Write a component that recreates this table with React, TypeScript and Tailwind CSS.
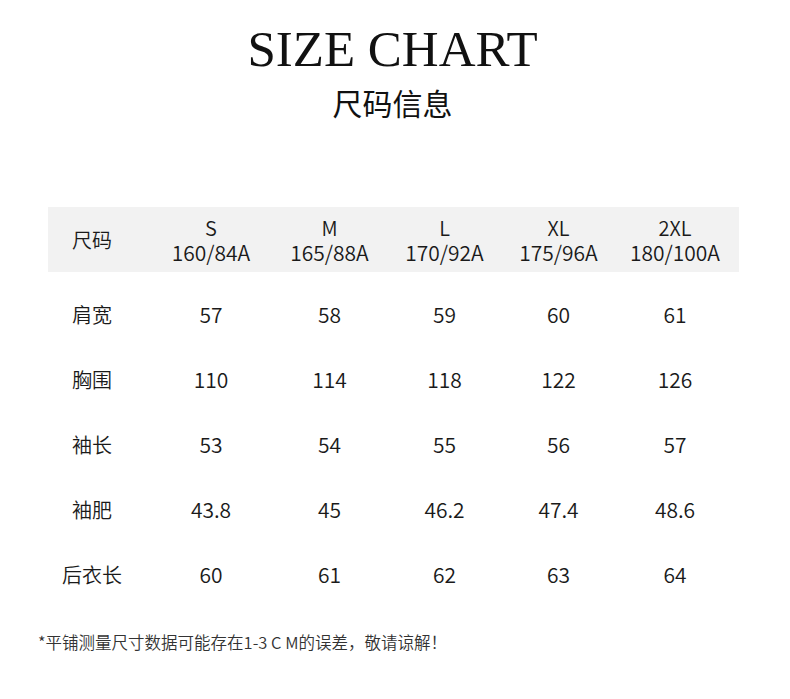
import React from "react";

const cjk = { fontFamily: '"Noto Sans CJK SC", "Noto Sans", sans-serif' };

const sizes = [
  { s: "S", d: "160/84A" },
  { s: "M", d: "165/88A" },
  { s: "L", d: "170/92A" },
  { s: "XL", d: "175/96A" },
  { s: "2XL", d: "180/100A" },
];

const rows: { label: string; vals: string[] }[] = [
  { label: "肩宽", vals: ["57", "58", "59", "60", "61"] },
  { label: "胸围", vals: ["110", "114", "118", "122", "126"] },
  { label: "袖长", vals: ["53", "54", "55", "56", "57"] },
  { label: "袖肥", vals: ["43.8", "45", "46.2", "47.4", "48.6"] },
  { label: "后衣长", vals: ["60", "61", "62", "63", "64"] },
];

const grid = "grid grid-cols-[103px_120px_117px_113px_115px_118px] items-center";

export default function App() {
  return (
    <div className="w-[790px] h-[699px] bg-white text-[#1a1a1a] font-[350]" style={cjk}>
      <div className="pt-[24px] pr-[5px] text-center">
        <div
          className="text-[51px] leading-[51px] text-[#111] font-normal"
          style={{ fontFamily: '"Liberation Serif", "Times New Roman", serif' }}
        >
          SIZE CHART
        </div>
        <div className="mt-[7px] text-[30px] leading-[40px] text-[#111] font-normal">尺码信息</div>
      </div>

      <div className="ml-[48px] mt-[85px] w-[691px]">
        <div className={`${grid} h-[65px] bg-[#f2f2f2]`}>
          <div className="pr-[15px] text-center text-[20px]">尺码</div>
          {sizes.map((z) => (
            <div key={z.s} className="flex flex-col items-center text-[21px] leading-[25px]">
              <span className="text-[20px] leading-[25px]">{z.s}</span>
              <span className="leading-[25px]">{z.d}</span>
            </div>
          ))}
        </div>
        <div className="mt-[10px]">
          {rows.map((r) => (
            <div key={r.label} className={`${grid} h-[65px]`}>
              <div className="pr-[15px] text-center text-[20px]">{r.label}</div>
              {r.vals.map((v, i) => (
                <div key={i} className="text-center text-[21px]">
                  {v}
                </div>
              ))}
            </div>
          ))}
        </div>
      </div>

      <div className="ml-[38px] mt-[23px] text-[16.5px] leading-[24px] text-[#333]">
        *平铺测量尺寸数据可能存在1-3 C M的误差，敬请谅解！
      </div>
    </div>
  );
}
